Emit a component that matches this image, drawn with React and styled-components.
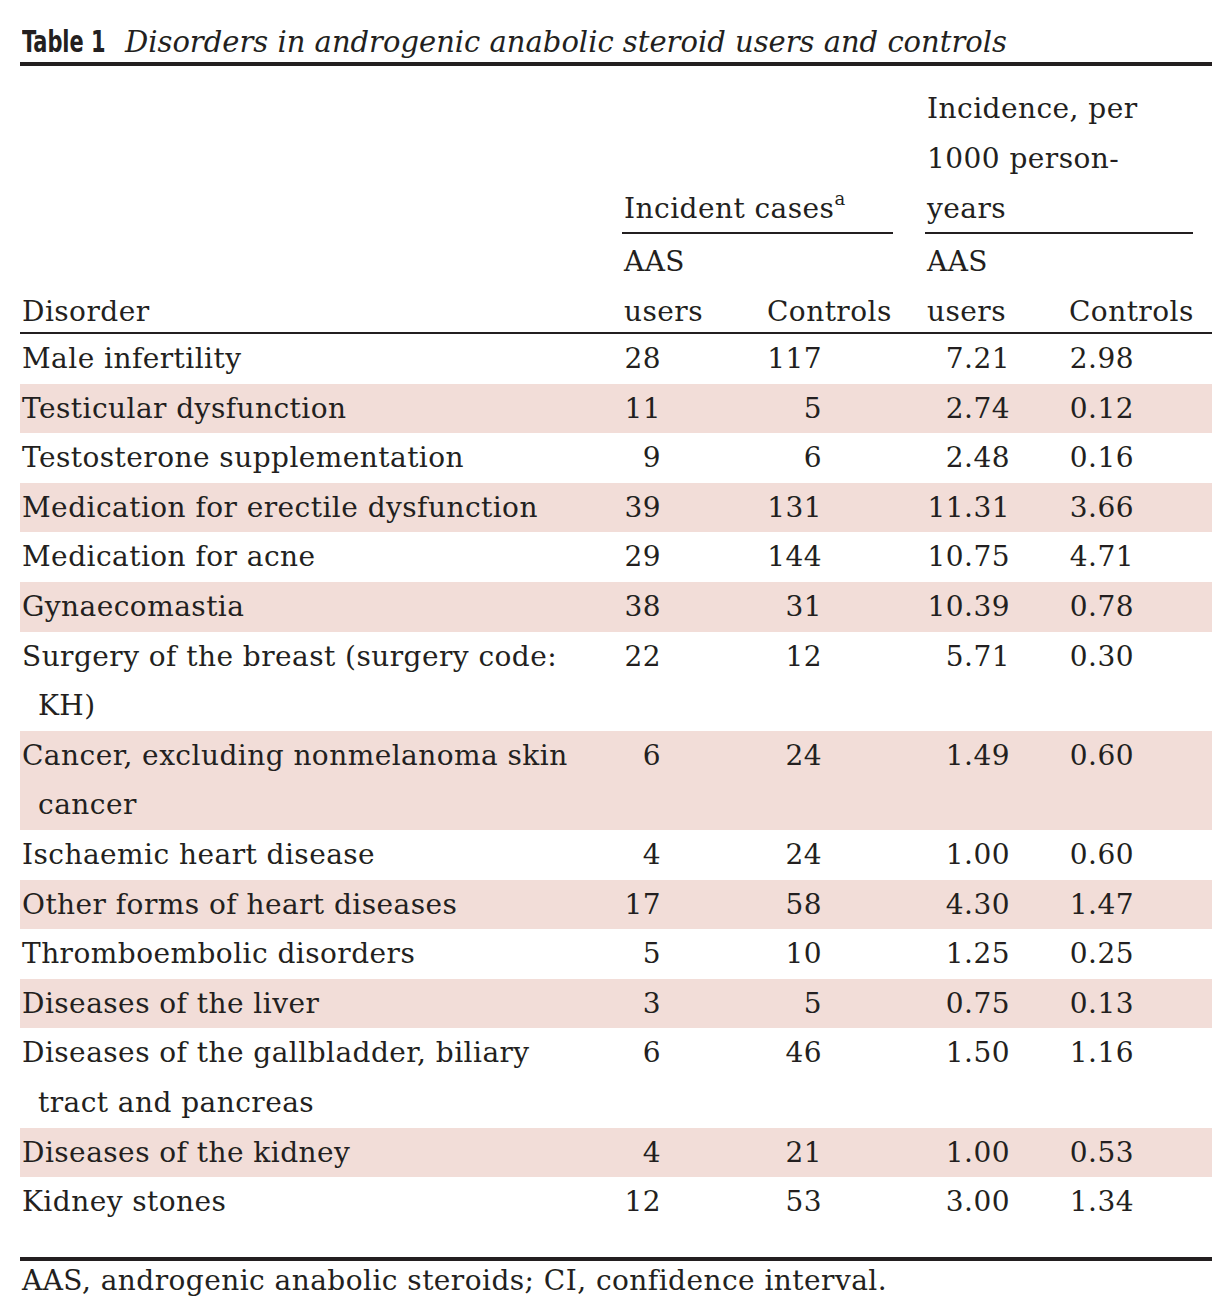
import React from 'react';
import styled, { createGlobalStyle } from 'styled-components';

const GlobalStyle = createGlobalStyle`
  html, body {
    margin: 0;
    padding: 0;
    background: #ffffff;
  }
  body {
    font-family: "DejaVu Serif", "Liberation Serif", serif;
    color: #231f20;
  }
`;

const COLS = '602px 143px 160px 142px 145px';
const LINE = 49.6;

const rows = [
  { name: ['Male infertility'], v: ['28', '117', '7.21', '2.98'] },
  { name: ['Testicular dysfunction'], v: ['11', '5', '2.74', '0.12'] },
  { name: ['Testosterone supplementation'], v: ['9', '6', '2.48', '0.16'] },
  { name: ['Medication for erectile dysfunction'], v: ['39', '131', '11.31', '3.66'] },
  { name: ['Medication for acne'], v: ['29', '144', '10.75', '4.71'] },
  { name: ['Gynaecomastia'], v: ['38', '31', '10.39', '0.78'] },
  { name: ['Surgery of the breast (surgery code:', 'KH)'], v: ['22', '12', '5.71', '0.30'] },
  { name: ['Cancer, excluding nonmelanoma skin', 'cancer'], v: ['6', '24', '1.49', '0.60'] },
  { name: ['Ischaemic heart disease'], v: ['4', '24', '1.00', '0.60'] },
  { name: ['Other forms of heart diseases'], v: ['17', '58', '4.30', '1.47'] },
  { name: ['Thromboembolic disorders'], v: ['5', '10', '1.25', '0.25'] },
  { name: ['Diseases of the liver'], v: ['3', '5', '0.75', '0.13'] },
  { name: ['Diseases of the gallbladder, biliary', 'tract and pancreas'], v: ['6', '46', '1.50', '1.16'] },
  { name: ['Diseases of the kidney'], v: ['4', '21', '1.00', '0.53'] },
  { name: ['Kidney stones'], v: ['12', '53', '3.00', '1.34'] },
];

// numbers are right aligned to these widths from the start of their column
const numWidths = [37, 55, 83, 65];

const App = () => {
  return (
    <Page>
      <GlobalStyle />
      <Caption>
        <Label>
          <LabelText>Table 1</LabelText>
        </Label>
        <Title>Disorders in androgenic anabolic steroid users and controls</Title>
      </Caption>

      <Head>
        <Group $col="2 / 4" $w={271}>
          <GroupText>
            Incident cases<sup>a</sup>
          </GroupText>
        </Group>
        <Group $col="4 / 6" $w={268}>
          <GroupText>
            Incidence, per
            <br />
            1000 person-
            <br />
            years
          </GroupText>
        </Group>
        <HeadCell $col="2" $row="4" $align="end">AAS</HeadCell>
        <HeadCell $col="4" $row="4" $align="end">AAS</HeadCell>
        <HeadCell $col="1" $row="5">Disorder</HeadCell>
        <HeadCell $col="2" $row="5">users</HeadCell>
        <HeadCell $col="3" $row="5">Controls</HeadCell>
        <HeadCell $col="4" $row="5">users</HeadCell>
        <HeadCell $col="5" $row="5">Controls</HeadCell>
      </Head>

      <Body>
        {rows.map((r, i) => (
          <Row key={r.name[0]} $shade={i % 2 === 1}>
            <NameCell>
              {r.name.map((line, j) => (
                <NameLine key={line} $cont={j > 0}>
                  {line}
                </NameLine>
              ))}
            </NameCell>
            {r.v.map((val, j) => (
              <Cell key={j}>
                <Num $w={numWidths[j]}>{val}</Num>
              </Cell>
            ))}
          </Row>
        ))}
      </Body>

      <Footnote>AAS, androgenic anabolic steroids; CI, confidence interval.</Footnote>
    </Page>
  );
};

const Page = styled.div`
  width: 1192px;
  margin-left: 20px;
  padding-top: 21px;
  padding-bottom: 1px;
  font-size: 28px;
  letter-spacing: 0.45px;
`;

const Caption = styled.div`
  display: flex;
  align-items: baseline;
  padding-left: 2px;
  height: 41px;
  border-bottom: 4px solid #231f20;
  letter-spacing: 0;
`;

const Label = styled.span`
  display: inline-block;
  width: 103px;
  flex-shrink: 0;
  white-space: nowrap;
`;

const LabelText = styled.span`
  display: inline-block;
  font-family: "Liberation Sans Narrow", "DejaVu Sans Condensed", "DejaVu Sans", sans-serif;
  font-weight: 700;
  font-size: 31px;
  line-height: 40px;
  transform: scaleX(0.75);
  transform-origin: left center;
`;

const Title = styled.span`
  font-style: italic;
  font-size: 29px;
  line-height: 40px;
`;

const Head = styled.div`
  display: grid;
  grid-template-columns: ${COLS};
  grid-template-rows: 50px 50px 48.5px 52.5px 45.5px;
  margin-top: 19.5px;
  border-bottom: 2px solid #231f20;
  line-height: 50px;
`;

const Group = styled.div`
  grid-column: ${(p) => p.$col};
  grid-row: 1 / 4;
  align-self: end;
  width: ${(p) => p.$w}px;
  border-bottom: 2px solid #231f20;
  white-space: nowrap;
`;

const GroupText = styled.div`
  padding-left: 2px;
  margin-bottom: -1.5px;

  sup {
    font-size: 18px;
    line-height: 0;
    vertical-align: 13px;
  }
`;

const HeadCell = styled.div`
  grid-column: ${(p) => p.$col};
  grid-row: ${(p) => p.$row};
  align-self: ${(p) => p.$align || 'start'};
  padding-left: 2px;
  white-space: nowrap;
`;

const Body = styled.div`
  display: flex;
  flex-direction: column;
  padding-bottom: 30px;
  border-bottom: 4px solid #231f20;
`;

const Row = styled.div`
  display: grid;
  grid-template-columns: ${COLS};
  background: ${(p) => (p.$shade ? '#f2ddd8' : 'transparent')};
  line-height: ${LINE}px;
`;

const NameCell = styled.div`
  padding-left: 2px;
  white-space: nowrap;
`;

const NameLine = styled.div`
  padding-left: ${(p) => (p.$cont ? '16px' : '0')};
`;

const Cell = styled.div`
  padding-left: 2px;
`;

const Num = styled.span`
  display: inline-block;
  min-width: ${(p) => p.$w}px;
  text-align: right;
`;

const Footnote = styled.div`
  padding-left: 2px;
  line-height: 40px;
`;

export default App;
